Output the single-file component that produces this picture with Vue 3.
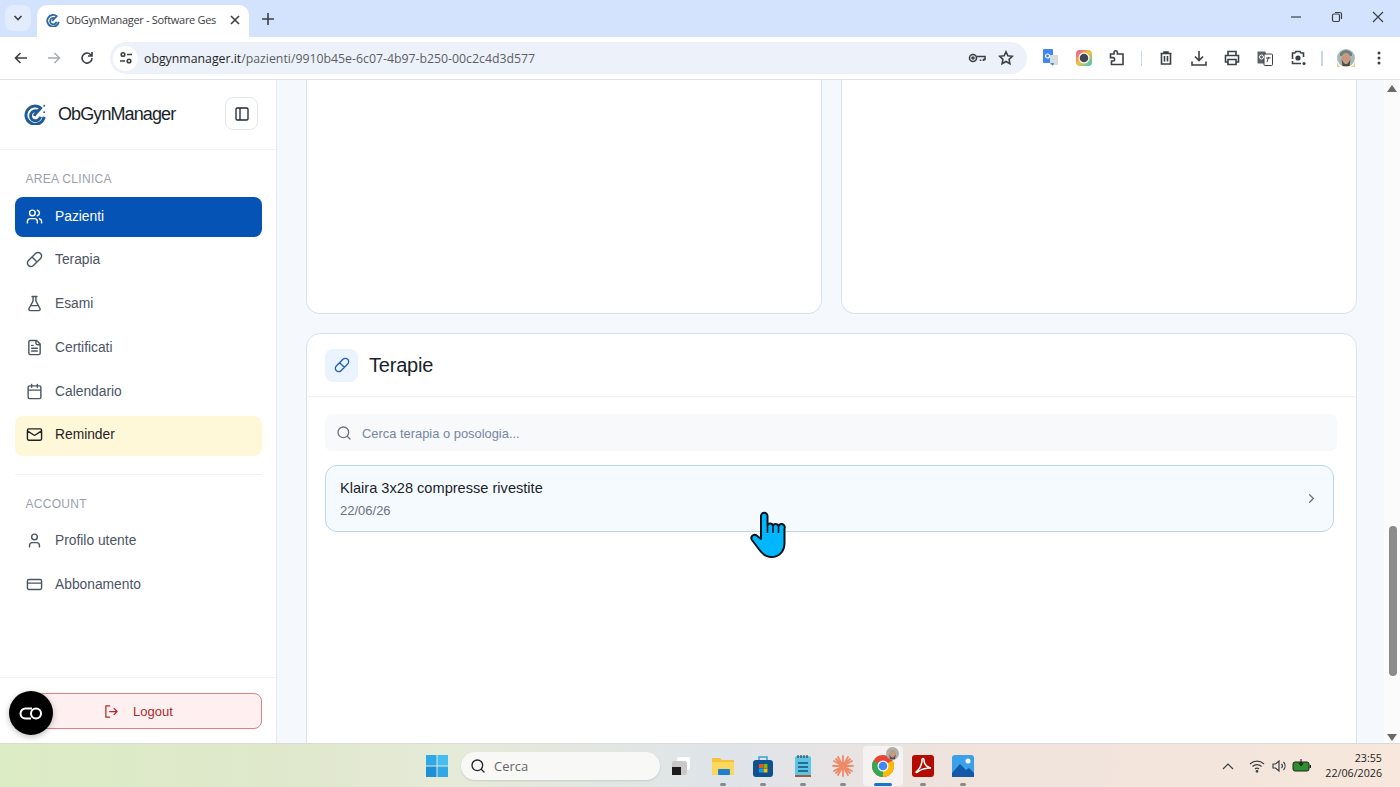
<template>
  <div class="screen">
    <!-- tab strip -->
    <header class="tabstrip">
      <button class="tab-list">
        <svg width="12" height="12" viewBox="0 0 12 12" class="ui-stroke strong"><path d="m2.500 4 3.500 3.500L9.500 4" /></svg>
      </button>
      <div class="tab">
        <svg width="14" height="14" viewBox="0 0 24 24" class="logo"><path d="M19 6a10 10 0 1 0 3 9" /><path d="M15 9a5.500 5.500 0 1 0 3 6" /><path d="M11 14c2-4 5-6 8-9" /></svg>
        <span class="tab-title">ObGynManager - Software Ges</span>
        <svg width="12" height="12" viewBox="0 0 12 12" class="ui-stroke strong"><path d="m2 2 8 8M10 2l-8 8" /></svg>
      </div>
      <svg width="14" height="14" viewBox="0 0 14 14" class="ui-stroke strong new-tab"><path d="M7 1v12M1 7h12" /></svg>
      <div class="window-controls">
        <svg width="12" height="12" viewBox="0 0 12 12" class="ui-stroke"><path d="M1 6h10" /></svg>
        <svg width="12" height="12" viewBox="0 0 12 12" class="ui-stroke"><rect x="1.500" y="3" width="7" height="7.500" rx="1.500" /><path d="M4 1.500h5a1.500 1.500 0 0 1 1.500 1.500v5" /></svg>
        <svg width="12" height="12" viewBox="0 0 12 12" class="ui-stroke"><path d="m1 1 10 10M11 1 1 11" /></svg>
      </div>
    </header>

    <!-- toolbar -->
    <div class="toolbar">
      <div class="tool">
        <svg width="16" height="16" viewBox="0 0 16 16" class="ui-stroke strong"><path d="M14 8H2.500M7.500 3l-5 5 5 5" /></svg>
      </div>
      <div class="tool">
        <svg width="16" height="16" viewBox="0 0 16 16" class="ui-stroke faded"><path d="M2 8h11.500M8.500 3l5 5-5 5" /></svg>
      </div>
      <div class="tool">
        <svg width="16" height="16" viewBox="0 0 16 16" class="ui-stroke strong"><path d="M13 8a5 5 0 1 1-1.500-3.500L13 6M13 2v4H9" /></svg>
      </div>
      <div class="omnibox">
        <span class="site-info">
          <svg width="14" height="14" viewBox="0 0 14 14" class="ui-stroke strong"><circle cx="4" cy="3.500" r="1.800" /><path d="M8 3.500h5M1 10h5" /><circle cx="10" cy="10" r="1.800" /></svg>
        </span>
        <span class="url"><span class="domain">obgynmanager.it</span>/pazienti/9910b45e-6c07-4b97-b250-00c2c4d3d577</span>
        <svg width="18" height="18" viewBox="0 0 18 18" class="ui-stroke strong key"><circle cx="5" cy="9" r="3.500" /><circle cx="5" cy="9" r="1" /><path d="M8.500 7.500H17v3h-1.500V12M12.500 10.500V12" /></svg>
        <svg width="16" height="16" viewBox="0 0 16 16" class="ui-stroke strong star"><path d="m8 1.800 1.900 4 4.400.5-3.200 3 .8 4.400L8 11.500l-3.900 2.200.8-4.400-3.200-3 4.400-.5Z" /></svg>
      </div>
      <div class="tool ext">
        <svg width="18" height="20" viewBox="0 0 18 20"><rect x="1" y="1" width="10" height="14" rx="1" fill="#4285f4" /><rect x="8" y="7" width="8" height="10" fill="#d9dce0" /><path d="m8 15 3 3 1-3z" fill="#4285f4" /><circle cx="5.500" cy="8" r="2" fill="none" stroke="#fff" stroke-width="1.200" /></svg>
      </div>
      <div class="tool">
        <svg width="16" height="16" viewBox="0 0 16 16"><rect width="16" height="16" rx="4" fill="url(#ringGrad)" /><circle cx="8" cy="8" r="5.500" fill="#fff" /><circle cx="8" cy="8" r="4.300" fill="#3f4852" /><defs><linearGradient id="ringGrad" x1="0" y1="0" x2="1" y2="1"><stop offset="0" stop-color="#f0489a" /><stop offset=".5" stop-color="#f5c33b" /><stop offset="1" stop-color="#21c6d8" /></linearGradient></defs></svg>
      </div>
      <div class="tool">
        <svg width="18" height="18" viewBox="0 0 18 18" class="ui-stroke strong"><path d="M2.500 5H6V3.500a1.700 1.700 0 0 1 3.400 0V5H15v10.500H3.500V12H5a1.700 1.700 0 0 0 0-3.400H2.500Z" /></svg>
      </div>
      <div class="tool-sep"><i /></div>
      <div class="tool">
        <svg width="16" height="16" viewBox="0 0 16 16" class="ui-stroke strong"><path d="M2.500 3.500h11M6 3.500V2h4v1.500M3.500 3.500V14h9V3.500M6.500 6v5.500M9.500 6v5.500" /></svg>
      </div>
      <div class="tool">
        <svg width="18" height="18" viewBox="0 0 18 18" class="ui-stroke strong"><path d="M9 2v9.500M5 7.500l4 4 4-4M2 12.500V16h14v-3.500" /></svg>
      </div>
      <div class="tool">
        <svg width="18" height="18" viewBox="0 0 18 18" class="ui-stroke strong"><path d="M5 6V2.500h8V6M5 13H2.500V6.500h13V13H13M5 10.500h8v5H5z" /></svg>
      </div>
      <div class="tool">
        <svg width="18" height="18" viewBox="0 0 18 18"><path d="M1.500 2.500h8l2 12h-9.500a.5.500 0 0 1-.5-.5z" fill="#5f6368" /><rect x="8" y="5" width="8.500" height="11.500" rx="1" fill="#fff" stroke="#3c4043" /><circle cx="5.500" cy="8" r="2" fill="none" stroke="#fff" /><path d="M10 9h4.500M12.500 8l-1.500 5" fill="none" stroke="#3c4043" /></svg>
      </div>
      <div class="tool">
        <svg width="16" height="16" viewBox="0 0 16 16" class="ui-stroke strong"><path d="M5 3 6 1.500h4L11 3h2.500v4M2.500 9V3H5M2.500 11v2.500H11" /><circle cx="8" cy="8" r="1.800" fill="#3c4043" /><circle cx="14" cy="13.500" r=".8" fill="#3c4043" /></svg>
      </div>
      <div class="tool-sep narrow"><i /></div>
      <div class="tool">
        <svg width="18" height="18" viewBox="0 0 18 18"><circle cx="9" cy="9" r="9" fill="#a8b8b8" /><path d="M3 4q6-6 12 0v3H3z" fill="#6d7f80" /><ellipse cx="9" cy="9" rx="4.500" ry="5" fill="#c79a80" /><path d="M4.500 10q4.500 10 9 0l-1 7H5.500z" fill="#5b4438" /><path d="M0 12q1 6 6 6H0zM18 12q-1 6-6 6h6z" fill="#e6d58e" /></svg>
      </div>
      <div class="tool">
        <svg width="4" height="14" viewBox="0 0 4 14" fill="#3c4043"><circle cx="2" cy="2" r="1.500" /><circle cx="2" cy="7" r="1.500" /><circle cx="2" cy="12" r="1.500" /></svg>
      </div>
    </div>

    <!-- page -->
    <div class="viewport">
      <aside class="sidebar">
        <div class="brand">
          <svg width="22" height="22" viewBox="0 0 24 24" class="logo big"><path d="M19 6a10 10 0 1 0 3 9" /><path d="M15 9a5.500 5.500 0 1 0 3 6" /><path d="M11 14c2-4 5-6 8-9" /><circle class="logo-dot" cx="22" cy="3" r="1" /><circle class="logo-dot" cx="22" cy="10" r="1" /></svg>
          <span class="brand-name">ObGynManager</span>
          <button class="collapse">
            <svg width="16" height="16" viewBox="0 0 24 24" class="lucide"><path :d="icons.panel" /></svg>
          </button>
        </div>

        <nav class="nav">
          <p class="nav-label">AREA CLINICA</p>
          <ul class="nav-list">
            <li v-for="item in clinicalItems" :key="item.label" class="nav-item" :class="item.state">
              <svg width="17" height="17" viewBox="0 0 24 24" class="lucide"><path :d="icons[item.icon]" /></svg>
              <span>{{ item.label }}</span>
            </li>
          </ul>
          <div class="nav-divider" />
          <p class="nav-label">ACCOUNT</p>
          <ul class="nav-list">
            <li v-for="item in accountItems" :key="item.label" class="nav-item">
              <svg width="17" height="17" viewBox="0 0 24 24" class="lucide"><path :d="icons[item.icon]" /></svg>
              <span>{{ item.label }}</span>
            </li>
          </ul>
        </nav>

        <div class="sidebar-footer">
          <button class="logout">
            <svg width="15" height="15" viewBox="0 0 24 24" class="lucide"><path d="M9 3H3v18h6M9 12h12M16 7l5 5-5 5" /></svg>
            <span>Logout</span>
          </button>
        </div>
      </aside>

      <main class="content">
        <div class="top-cards">
          <section class="blank-card" />
          <section class="blank-card" />
        </div>
        <section class="card">
          <div class="card-head">
            <span class="card-icon">
              <svg width="16" height="16" viewBox="0 0 24 24" class="lucide"><path :d="icons.pill" /></svg>
            </span>
            <h2>Terapie</h2>
          </div>
          <div class="card-body">
            <div class="search">
              <svg width="16" height="16" viewBox="0 0 24 24" class="lucide"><path :d="icons.search" /></svg>
              <span>Cerca terapia o posologia...</span>
            </div>
            <div class="therapy">
              <div class="therapy-text">
                <strong>Klaira 3x28 compresse rivestite</strong>
                <small>22/06/26</small>
              </div>
              <svg width="15" height="15" viewBox="0 0 24 24" class="lucide"><path d="m9 18 6-6-6-6" /></svg>
            </div>
          </div>
        </section>
      </main>

      <div class="scrollbar">
        <svg width="10" height="7" viewBox="0 0 10 7"><path d="M5 0 10 7H0z" fill="#6a6a6a" /></svg>
        <div class="scroll-track"><div class="scroll-thumb" /></div>
        <svg width="10" height="7" viewBox="0 0 10 7"><path d="M5 7 0 0h10z" fill="#6a6a6a" /></svg>
      </div>

      <!-- floating button and pointer over the page -->
      <div class="float-btn">
        <svg width="24" height="13" viewBox="0 0 24 13" fill="none" stroke="#fff" stroke-width="2"><path d="M13 1.500H6.500a5 5 0 0 0 0 10H12" /><circle cx="17" cy="6.500" r="5" /></svg>
      </div>
      <svg class="pointer" width="38" height="49" viewBox="0 0 38 49">
        <path d="M11 6a3.200 3.200 0 0 1 6.500 0V15a3 3 0 0 1 5.500.5 3 3 0 0 1 5.500.5 3 3 0 0 1 6 2.500V33c0 9-6 14-13 14-6 0-9-3-12-7L2 30c-2-3 1-6 4-5l5 4Z" fill="#00b7ff" stroke="#06141c" stroke-width="2" stroke-linejoin="round" />
        <path d="M17.500 15v8M23 15.500V23M28.500 16v7" fill="none" stroke="#06141c" stroke-width="1.600" />
      </svg>
    </div>

    <!-- windows taskbar -->
    <footer class="taskbar">
      <div class="task-center">
        <svg class="win" width="22" height="22" viewBox="0 0 22 22"><rect width="10.500" height="10.500" fill="#2ea8e6" /><rect x="11.500" width="10.500" height="10.500" fill="#46bdf0" /><rect y="11.500" width="10.500" height="10.500" fill="#1c8fd8" /><rect x="11.500" y="11.500" width="10.500" height="10.500" fill="#2ea8e6" /></svg>
        <div class="task-search">
          <svg width="16" height="16" viewBox="0 0 24 24" class="lucide dark"><path :d="icons.search" /></svg>
          <span>Cerca</span>
        </div>
        <div class="task-icons">
          <div class="task-icon first">
            <svg width="22" height="22" viewBox="0 0 22 22"><rect x="7" y="2" width="13" height="13" rx="2" fill="#fff" /><rect x="2" y="6" width="15" height="14" rx="2" fill="#c9c9c9" /><rect x="2" y="12" width="9" height="8" fill="#1c1c1c" /></svg>
          </div>
          <div class="task-icon open">
            <svg width="24" height="22" viewBox="0 0 24 22"><path d="M1 3h8l2 2h12v15H1z" fill="#f5c33b" /><rect x="1" y="7" width="22" height="13" rx="1" fill="#fbd75b" /><rect x="7" y="14" width="12" height="6" rx="1" fill="#1f7fd1" /></svg>
          </div>
          <div class="task-icon open">
            <svg width="22" height="24" viewBox="0 0 22 24"><path d="M7 6V3h8v3" fill="none" stroke="#33a3dc" stroke-width="1.500" /><rect x="1" y="6" width="20" height="17" rx="3" fill="#11508f" /><rect x="7" y="10" width="4" height="4" fill="#f25022" /><rect x="11.500" y="10" width="4" height="4" fill="#7fba00" /><rect x="7" y="14.500" width="4" height="4" fill="#00a4ef" /><rect x="11.500" y="14.500" width="4" height="4" fill="#ffb900" /></svg>
          </div>
          <div class="task-icon open">
            <svg width="18" height="24" viewBox="0 0 18 24"><rect x="1" y="2" width="16" height="20" rx="2" fill="#5ec4e6" /><rect x="1" y="21" width="16" height="2" fill="#a05a3c" /><path d="M4 9h10M4 13h10M4 17h10" stroke="#10516e" stroke-width="1.400" /><path d="M4 1v3M7 1v3M10 1v3M13 1v3" stroke="#222" /></svg>
          </div>
          <div class="task-icon open">
            <svg width="22" height="22" viewBox="0 0 22 22" stroke="#ee8a6a" stroke-width="1.800" stroke-linecap="round"><path d="M11 1v20M1 11h20M4 4l14 14M18 4 4 18M6 2l10 18M16 2 6 20M2 6l18 10M20 6 2 16" /></svg>
          </div>
          <div class="task-icon open active">
            <svg width="24" height="24" viewBox="0 0 24 24"><circle cx="12" cy="12" r="11" fill="#ea4335" /><path d="M12 12 2.500 6.500A11 11 0 0 0 12 23z" fill="#34a853" /><path d="M12 12v11a11 11 0 0 0 9.500-16.500z" fill="#fbbc05" /><circle cx="12" cy="12" r="5.500" fill="#fff" /><circle cx="12" cy="12" r="4.300" fill="#4285f4" /></svg>
            <svg class="badge" width="13" height="13" viewBox="0 0 18 18"><circle cx="9" cy="9" r="9" fill="#a8b0b0" /><ellipse cx="9" cy="9" rx="4.500" ry="5" fill="#c79a80" /><path d="M4.500 10q4.500 10 9 0l-1 7H5.500z" fill="#5b4438" /></svg>
          </div>
          <div class="task-icon open">
            <svg width="22" height="22" viewBox="0 0 22 22"><rect width="22" height="22" rx="3" fill="#b30b00" /><path d="M4 17c3-2 6-7 6-12 0-2 2-2 2 0 0 4 3 7 7 8-4 0-9 1-12 3-1 1-3 2-3 1Z" fill="none" stroke="#fff" stroke-width="1.500" /></svg>
          </div>
          <div class="task-icon open">
            <svg width="22" height="22" viewBox="0 0 22 22"><rect width="22" height="22" rx="3" fill="#3aa0e8" /><path d="M0 18 8 9l6 6 3-2 5 5v4H0z" fill="#1259a8" /><circle cx="16" cy="6" r="2.500" fill="#fff" /></svg>
          </div>
        </div>
      </div>
      <div class="tray">
        <svg width="12" height="8" viewBox="0 0 12 8" class="ui-stroke tray-chevron"><path d="m1 7 5-5 5 5" /></svg>
        <svg width="16" height="14" viewBox="0 0 16 14" class="ui-stroke"><path d="M1 5a10 10 0 0 1 14 0M3.500 7.500a6.500 6.500 0 0 1 9 0M6 10a3 3 0 0 1 4 0" /><circle cx="8" cy="12.300" r=".8" fill="#222" /></svg>
        <svg width="16" height="14" viewBox="0 0 16 14" class="ui-stroke"><path d="M1 5h2.500L7 2v10L3.500 9H1zM9.500 5a3 3 0 0 1 0 4M11.500 3a6 6 0 0 1 0 8" /></svg>
        <svg class="battery" width="20" height="14" viewBox="0 0 20 14"><rect x="1" y="3" width="16" height="9" rx="2" fill="#2f8f2f" stroke="#222" /><rect x="17.500" y="6" width="1.500" height="3" fill="#222" /><path d="M9 0v6M7 4l2 3 2-3" stroke="#111" fill="none" /></svg>
        <div class="clock">
          <span>23:55</span>
          <span>22/06/2026</span>
        </div>
      </div>
    </footer>
  </div>
</template>

<script setup>
const icons = {
  users: 'M16 21v-2a4 4 0 0 0-4-4H6a4 4 0 0 0-4 4v2M5 7a4 4 0 1 0 8 0a4 4 0 1 0-8 0M22 21v-2a4 4 0 0 0-3-3.870M16 3.130a4 4 0 0 1 0 7.750',
  pill: 'm10.500 20.500 10-10a4.950 4.950 0 1 0-7-7l-10 10a4.950 4.950 0 1 0 7 7ZM8.500 8.500l7 7',
  flask: 'M14 2v6a2 2 0 0 0 .245.960l5.510 10.080A2 2 0 0 1 18 22H6a2 2 0 0 1-1.755-2.960l5.510-10.080A2 2 0 0 0 10 8V2M6.453 15h11.094M8.500 2h7',
  file: 'M15 2H6a2 2 0 0 0-2 2v16a2 2 0 0 0 2 2h12a2 2 0 0 0 2-2V7ZM14 2v4a2 2 0 0 0 2 2h4M10 9H8M16 13H8M16 17H8',
  calendar: 'M8 2v4M16 2v4M5 4h14a2 2 0 0 1 2 2v14a2 2 0 0 1-2 2H5a2 2 0 0 1-2-2V6a2 2 0 0 1 2-2ZM3 10h18',
  mail: 'M4 4h16a2 2 0 0 1 2 2v12a2 2 0 0 1-2 2H4a2 2 0 0 1-2-2V6a2 2 0 0 1 2-2ZM22 7l-8.970 5.700a1.940 1.940 0 0 1-2.060 0L2 7',
  user: 'M19 21v-2a4 4 0 0 0-4-4H9a4 4 0 0 0-4 4v2M8 7a4 4 0 1 0 8 0a4 4 0 1 0-8 0',
  card: 'M4 5h16a2 2 0 0 1 2 2v10a2 2 0 0 1-2 2H4a2 2 0 0 1-2-2V7a2 2 0 0 1 2-2ZM2 10h20',
  panel: 'M5 3h14a2 2 0 0 1 2 2v14a2 2 0 0 1-2 2H5a2 2 0 0 1-2-2V5a2 2 0 0 1 2-2ZM9 3v18',
  search: 'M3 11a8 8 0 1 0 16 0a8 8 0 1 0-16 0M21 21l-4.300-4.300',
};

const clinicalItems = [
  { label: 'Pazienti', icon: 'users', state: 'active' },
  { label: 'Terapia', icon: 'pill' },
  { label: 'Esami', icon: 'flask' },
  { label: 'Certificati', icon: 'file' },
  { label: 'Calendario', icon: 'calendar' },
  { label: 'Reminder', icon: 'mail', state: 'highlight' },
];

const accountItems = [
  { label: 'Profilo utente', icon: 'user' },
  { label: 'Abbonamento', icon: 'card' },
];
</script>

<style scoped>
.screen {
  width: 1400px;
  height: 787px;
  display: flex;
  flex-direction: column;
  overflow: hidden;
  font-family: "Liberation Sans", Arial, sans-serif;
  color: #111827;
  background: #fff;
}

button {
  font: inherit;
  cursor: pointer;
}

.ui-stroke {
  fill: none;
  stroke: #3c4043;
  stroke-width: 1.200;
  flex: none;
}

.ui-stroke.strong {
  stroke-width: 1.600;
}

.ui-stroke.faded {
  stroke: #a4a8ad;
  stroke-width: 1.400;
}

.logo {
  fill: none;
  stroke: #2f6aa3;
  stroke-width: 3.200;
  flex: none;
}

.logo.big {
  stroke: #1f5c96;
}

.logo-dot {
  fill: #1f5c96;
  stroke: none;
}

.lucide {
  fill: none;
  stroke: currentColor;
  stroke-width: 2;
  stroke-linecap: round;
  stroke-linejoin: round;
  flex: none;
}

/* browser chrome */
.tabstrip {
  height: 37px;
  flex: none;
  display: flex;
  align-items: flex-end;
  padding-left: 5px;
  background: #d3e3fd;
}

.tab-list {
  width: 26px;
  height: 26px;
  margin-bottom: 6px;
  padding: 0;
  display: flex;
  align-items: center;
  justify-content: center;
  border: 0;
  border-radius: 8px;
  background: #e2ecfc;
}

.tab {
  width: 212px;
  height: 32px;
  margin-left: 6px;
  padding: 0 8px 3px 9px;
  box-sizing: border-box;
  display: flex;
  align-items: center;
  gap: 6px;
  border-radius: 10px 10px 0 0;
  background: #fff;
}

.tab-title {
  flex: 1;
  overflow: hidden;
  white-space: nowrap;
  font: 11px "Open Sans", sans-serif;
  letter-spacing: -0.3px;
  color: #3c4043;
}

.new-tab {
  margin: 0 0 11px 12px;
}

.window-controls {
  margin-left: auto;
  margin-bottom: 14px;
  padding-right: 16px;
  display: flex;
  gap: 29px;
}

.toolbar {
  height: 43px;
  flex: none;
  box-sizing: border-box;
  display: flex;
  align-items: center;
  padding: 0 4.500px;
  background: #fff;
  border-bottom: 1px solid #e1e3e6;
  border-radius: 8px 8px 0 0;
}

.tool {
  width: 33px;
  flex: none;
  display: flex;
  align-items: center;
  justify-content: center;
}

.tool-sep {
  width: 16px;
  flex: none;
  display: flex;
  justify-content: center;
}

.tool-sep.narrow {
  width: 15px;
}

.tool-sep i {
  width: 1.500px;
  height: 15px;
  background: #c7d6ee;
}

.omnibox {
  flex: 1;
  height: 32px;
  margin: 0 7.500px 0 6.500px;
  padding: 0 13px 0 3px;
  display: flex;
  align-items: center;
  border-radius: 16px;
  background: #edf2fa;
}

.site-info {
  width: 25px;
  height: 25px;
  display: flex;
  align-items: center;
  justify-content: center;
  border-radius: 50%;
  background: #fff;
}

.url {
  margin-left: 6px;
  flex: 1;
  font: 12.300px "Open Sans", sans-serif;
  color: #5a5e63;
  white-space: nowrap;
}

.domain {
  color: #1f1f1f;
}

.star {
  margin-left: 12px;
}

/* page */
.viewport {
  flex: 1;
  min-height: 0;
  position: relative;
  display: flex;
  background: #f5f8fd;
}

.sidebar {
  width: 277px;
  flex: none;
  box-sizing: border-box;
  display: flex;
  flex-direction: column;
  background: #fff;
  border-right: 1px solid #e5ebf4;
}

.brand {
  height: 70px;
  flex: none;
  box-sizing: border-box;
  display: flex;
  align-items: center;
  padding: 0 18px 2px 24px;
  border-bottom: 1px solid #eef1f6;
}

.brand-name {
  margin: 2px 0 0 12px;
  font-size: 18px;
  letter-spacing: -0.9px;
  color: #1a1f2b;
}

.collapse {
  width: 33px;
  height: 33px;
  margin-left: auto;
  padding: 0;
  display: flex;
  align-items: center;
  justify-content: center;
  border: 1px solid #e5e8ee;
  border-radius: 8px;
  background: #fff;
  color: #1f2937;
}

.nav {
  flex: 1;
  padding: 0 14px 0 15px;
}

.nav-label {
  margin: 21px 0 10px 10.500px;
  font-size: 12px;
  line-height: 16px;
  letter-spacing: 0.3px;
  color: #9aa1ad;
}

.nav-list {
  margin: 0;
  padding: 0;
  list-style: none;
  display: flex;
  flex-direction: column;
  gap: 3.800px;
}

.nav-item {
  height: 40px;
  box-sizing: border-box;
  display: flex;
  align-items: center;
  gap: 12px;
  padding: 0 0 2px 11px;
  border-radius: 8px;
  font-size: 13.800px;
  color: #4b5563;
}

.nav-item.active {
  background: #0653b6;
  color: #fff;
}

.nav-item.highlight {
  background: #fff8d8;
  color: #1f2329;
}

.nav-divider {
  height: 1px;
  margin-top: 18px;
  background: #eef1f6;
}

.sidebar-footer {
  height: 66px;
  flex: none;
  box-sizing: border-box;
  padding: 15px 14px 0 15px;
  border-top: 1px solid #eef1f6;
}

.logout {
  width: 100%;
  height: 36px;
  display: flex;
  align-items: center;
  justify-content: center;
  gap: 14px;
  border: 1px solid #e08080;
  border-radius: 8px;
  background: #fef0f0;
  color: #b02a2a;
  font-size: 13px;
}

.content {
  flex: 1;
  min-width: 0;
  overflow: hidden;
  padding: 0 27px 0 29px;
  display: flex;
  flex-direction: column;
  gap: 19px;
}

.top-cards {
  flex: none;
  display: grid;
  grid-template-columns: 1fr 1fr;
  gap: 19px;
}

.blank-card {
  height: 234px;
  box-sizing: border-box;
  background: #fff;
  border: 1px solid #d9e3f0;
  border-top: 0;
  border-radius: 0 0 14px 14px;
}

.card {
  flex: 1;
  margin-bottom: -20px;
  background: #fff;
  border: 1px solid #d9e3f0;
  border-radius: 14px;
}

.card-head {
  height: 63px;
  box-sizing: border-box;
  display: flex;
  align-items: center;
  gap: 11px;
  padding-left: 18px;
  border-bottom: 1px solid #f0f2f6;
}

.card-icon {
  width: 33px;
  height: 33px;
  display: flex;
  align-items: center;
  justify-content: center;
  border-radius: 8px;
  background: #ebf3fe;
  color: #1e62b8;
}

.card-head h2 {
  margin: 0;
  font-size: 20px;
  font-weight: 400;
  letter-spacing: -0.2px;
  color: #1a1f2b;
}

.card-body {
  padding: 17px 19px 0 18px;
  display: flex;
  flex-direction: column;
  gap: 14px;
}

.search {
  height: 37px;
  box-sizing: border-box;
  display: flex;
  align-items: center;
  gap: 10px;
  padding-left: 11px;
  border-radius: 7px;
  background: #f8f9fb;
  color: #6b7280;
}

.search span {
  margin-top: 1px;
  font-size: 12.900px;
  color: #7486a4;
}

.therapy {
  height: 67px;
  box-sizing: border-box;
  margin-right: 3px;
  padding: 0 14px 0 14px;
  display: flex;
  align-items: center;
  justify-content: space-between;
  border: 1.500px solid #bcd5ee;
  border-radius: 12px;
  background: #f5faff;
  color: #6b7280;
}

.therapy-text {
  display: flex;
  flex-direction: column;
  gap: 7px;
}

.therapy-text strong {
  font-size: 14.600px;
  font-weight: 400;
  color: #1a1f2b;
}

.therapy-text small {
  font-size: 13px;
  color: #6b7280;
}

.scrollbar {
  width: 16px;
  flex: none;
  box-sizing: border-box;
  padding: 5px 0 2px;
  display: flex;
  flex-direction: column;
  align-items: center;
  background: #fbfbfb;
}

.scroll-track {
  flex: 1;
  width: 100%;
  padding-top: 434px;
  box-sizing: border-box;
}

.scroll-thumb {
  width: 8px;
  height: 150px;
  margin-left: 5px;
  border-radius: 4px;
  background: #8b8b8b;
}

.float-btn {
  position: absolute;
  left: 9px;
  top: 611px;
  width: 44px;
  height: 44px;
  display: flex;
  align-items: center;
  justify-content: center;
  border-radius: 50%;
  background: #000;
  box-shadow: 0 2px 6px rgba(0, 0, 0, 0.25);
}

.pointer {
  position: absolute;
  left: 750px;
  top: 430px;
}

/* taskbar */
.taskbar {
  height: 44px;
  flex: none;
  box-sizing: border-box;
  display: flex;
  align-items: center;
  justify-content: space-between;
  padding: 0 18px 0 426px;
  border-top: 1px solid #d8dcd8;
  background: linear-gradient(90deg, #dcecc4 0%, #dfe8cc 20%, #e6ead8 32%, #dfe4ea 52%, #efe3dc 68%, #f7e7dc 100%);
}

.task-center {
  display: flex;
  align-items: center;
}

.task-search {
  width: 199px;
  height: 28px;
  margin-left: 13px;
  padding-left: 9px;
  box-sizing: border-box;
  display: flex;
  align-items: center;
  gap: 8px;
  border-radius: 14px;
  background: #f8f8f6;
  box-shadow: 0 1px 2px rgba(0, 0, 0, 0.12);
  font: 13px "Open Sans", sans-serif;
  color: #666;
}

.lucide.dark {
  color: #222;
}

.task-icons {
  margin-left: 1px;
  display: flex;
  align-items: center;
}

.task-icon {
  position: relative;
  width: 40px;
  height: 40px;
  display: flex;
  align-items: center;
  justify-content: center;
}

.task-icon.first {
  width: 42px;
  justify-content: flex-start;
  padding-left: 9px;
  box-sizing: border-box;
}

.task-icon.open::after {
  content: "";
  position: absolute;
  left: 17px;
  bottom: 0;
  width: 6px;
  height: 2.500px;
  border-radius: 2px;
  background: #8a8a8a;
}

.task-icon.active {
  background: rgba(255, 255, 255, 0.55);
  border-radius: 4px;
}

.task-icon.active::after {
  left: 11px;
  width: 18px;
  background: #1a73d0;
}

.badge {
  position: absolute;
  top: 1px;
  right: 4px;
}

.tray {
  display: flex;
  align-items: center;
  gap: 7px;
}

.tray-chevron {
  margin-right: 8px;
}

.battery {
  margin-left: -3px;
}

.clock {
  margin-left: 6px;
  display: flex;
  flex-direction: column;
  align-items: flex-end;
  gap: 1px;
  font: 10.700px/14px "Open Sans", sans-serif;
  color: #222;
}
</style>
